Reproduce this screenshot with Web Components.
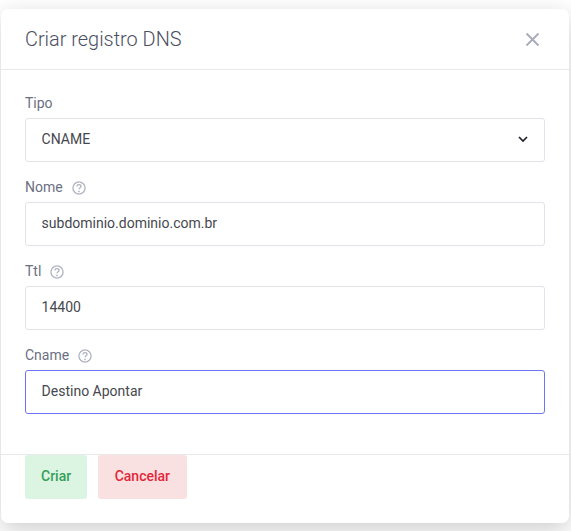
<!DOCTYPE html>
<html lang="pt-BR">
<head>
<meta charset="utf-8">
<title>Criar registro DNS</title>
<style>
html,body{margin:0;height:100%;}
body{background:#fff;font-family:Roboto,"Liberation Sans",sans-serif;overflow:hidden;}
</style>
</head>
<body>
<dns-modal heading="Criar registro DNS">
    <form-field label="Tipo"><select-box value="CNAME"></select-box></form-field>
    <form-field label="Nome" help><text-box value="subdominio.dominio.com.br"></text-box></form-field>
    <form-field label="Ttl" help><text-box value="14400"></text-box></form-field>
    <form-field label="Cname" help><text-box value="Destino Apontar" focused></text-box></form-field>
    <soft-button slot="footer" kind="ok">Criar</soft-button>
    <soft-button slot="footer" kind="cancel">Cancelar</soft-button>
</dns-modal>
<script>
class DnsModal extends HTMLElement{
    constructor(){
        super();
        this.shadowDOM=this.attachShadow({mode:"open"});
    }
    connectedCallback(){
        this.shadowDOM.innerHTML=`
        <style>
        :host{
            display:block;
            box-sizing:border-box;
            height:100%;
            padding:9px 2px 8px 1px;
        }
        *{box-sizing:border-box;}
        .box{
            height:514px;
            background:#fff;
            border-radius:7px;
            box-shadow:0 7px 24px rgba(0,0,0,.2);
            display:flex;
            flex-direction:column;
        }
        header{
            height:61px;
            flex:none;
            padding:0 29px 0 24px;
            display:flex;
            align-items:center;
            justify-content:space-between;
            border-bottom:1px solid #e9e9e9;
        }
        h2{
            margin:0;
            font-size:19.9px;
            font-weight:300;
            color:#4b4e60;
        }
        svg{display:block;}
        .body{
            flex:none;
            height:385px;
            padding:24px 24px 0;
            display:flex;
            flex-direction:column;
            gap:16px;
            border-bottom:1px solid #e9e9e9;
        }
        footer{
            display:flex;
            gap:11px;
            padding:0 24px;
        }
        </style>
        <div class="box">
            <header>
                <h2>${this.getAttribute("heading")}</h2>
                <svg width="15" height="15" viewBox="0 0 15 15"><path d="M1.5 1.5l12 12M13.5 1.5l-12 12" stroke="#a9adbb" stroke-width="1.9" fill="none"/></svg>
            </header>
            <div class="body"><slot></slot></div>
            <footer><slot name="footer"></slot></footer>
        </div>
        `;
    }
}

class FormField extends HTMLElement{
    constructor(){
        super();
        this.shadowDOM=this.attachShadow({mode:"open"});
    }
    connectedCallback(){
        const help=this.hasAttribute("help")?`
            <svg width="14" height="14" viewBox="0 0 14 14">
                <circle cx="7" cy="7" r="6.1" fill="none" stroke="#b0b3c0" stroke-width="1.3"/>
                <path d="M5 5.5c0-1.1.9-1.8 2-1.8s2 .7 2 1.7c0 1.4-2 1.3-2 2.9" fill="none" stroke="#b0b3c0" stroke-width="1.3"/>
                <circle cx="7" cy="10.4" r=".85" fill="#b0b3c0"/>
            </svg>`:"";
        this.shadowDOM.innerHTML=`
        <style>
        :host{display:block;}
        .label{
            height:18px;
            margin-bottom:6px;
            display:flex;
            align-items:center;
            gap:9px;
            font-size:14px;
            color:#6b6f82;
        }
        svg{display:block;margin-top:1px;}
        </style>
        <div class="label"><span>${this.getAttribute("label")}</span>${help}</div>
        <slot></slot>
        `;
    }
}

class TextBox extends HTMLElement{
    constructor(){
        super();
        this.shadowDOM=this.attachShadow({mode:"open"});
    }
    connectedCallback(){
        const color=this.hasAttribute("focused")?"#6f73f5":"#e1e3ea";
        this.shadowDOM.innerHTML=`
        <style>
        :host{
            display:flex;
            align-items:center;
            box-sizing:border-box;
            height:44px;
            padding:0 16px 2px 15.6px;
            border:1px solid ${color};
            border-radius:3px;
            background:#fff;
            font-size:14px;
            color:#46484f;
        }
        </style>
        <span>${this.getAttribute("value")}</span>
        `;
    }
}

class SelectBox extends HTMLElement{
    constructor(){
        super();
        this.shadowDOM=this.attachShadow({mode:"open"});
    }
    connectedCallback(){
        this.shadowDOM.innerHTML=`
        <style>
        :host{
            display:flex;
            align-items:center;
            justify-content:space-between;
            box-sizing:border-box;
            height:44px;
            padding:0 15px 2px 15.6px;
            border:1px solid #e1e3ea;
            border-radius:3px;
            background:#fff;
            font-size:14px;
            color:#46484f;
        }
        svg{display:block;}
        </style>
        <span>${this.getAttribute("value")}</span>
        <svg width="12" height="8" viewBox="0 0 12 8"><path d="M2 2l4 4 4-4" fill="none" stroke="#1e2129" stroke-width="1.7"/></svg>
        `;
    }
}

class SoftButton extends HTMLElement{
    constructor(){
        super();
        this.shadowDOM=this.attachShadow({mode:"open"});
    }
    connectedCallback(){
        const ok=this.getAttribute("kind")==="ok";
        this.shadowDOM.innerHTML=`
        <style>
        :host{
            display:flex;
            align-items:center;
            box-sizing:border-box;
            height:44px;
            padding:0 ${ok?"16px":"16.5px"} 2px;
            border-radius:3px;
            background:${ok?"#dcf5e2":"#f9e0e1"};
            color:${ok?"#359f5a":"#e3273a"};
            font-size:14px;
            font-weight:500;
        }
        </style>
        <slot></slot>
        `;
    }
}

customElements.define("dns-modal",DnsModal);
customElements.define("form-field",FormField);
customElements.define("text-box",TextBox);
customElements.define("select-box",SelectBox);
customElements.define("soft-button",SoftButton);
</script>
</body>
</html>
